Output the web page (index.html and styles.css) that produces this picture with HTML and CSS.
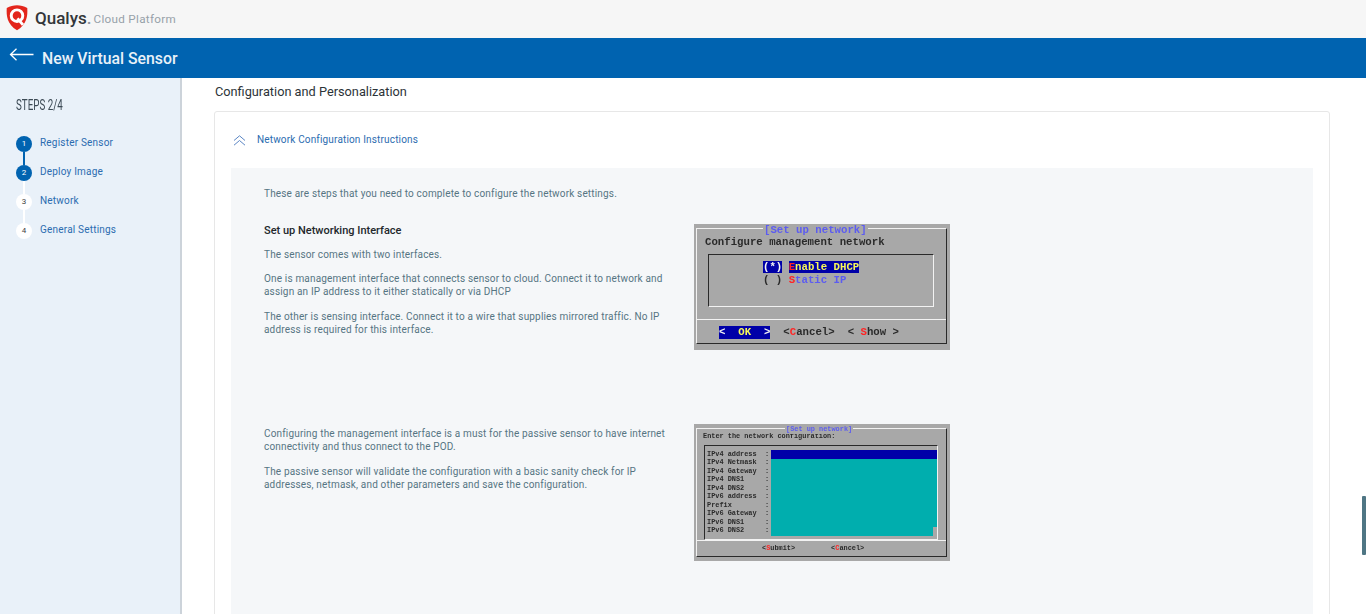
FILE: index.html
```html
<!DOCTYPE html>
<html lang="en">
<head>
    <meta charset="UTF-8">
    <title>New Virtual Sensor</title>
    <link rel="stylesheet" href="styles.css">
</head>
<body>
    <header class="topbar">
        <svg class="logo" width="22" height="27" viewBox="0 0 24 28">
            <path d="M12 0.500 C8 0.500 4.500 1.500 0.800 3.500 C0.300 12 1 21 12 28 C23 21 23.700 12 23.200 3.500 C19.500 1.500 16 0.500 12 0.500 Z" fill="#e3261c"/>
            <circle cx="12" cy="12" r="6.300" fill="none" stroke="#fff" stroke-width="3.200"/>
            <path d="M12.500 15 L18.500 22" fill="none" stroke="#fff" stroke-width="3.200"/>
        </svg>
        <span class="brand">Qualys<span class="brand-dot">.</span></span>
        <span class="brand-sub">Cloud Platform</span>
    </header>

    <div class="titlebar">
        <svg class="back" width="25" height="14" viewBox="0 0 25 14">
            <path d="M24.500 6.500 H1.500 M7.500 0.700 L1.500 6.500 L7.500 12.300" fill="none" stroke="#fff" stroke-width="1.300"/>
        </svg>
        <h1>New Virtual Sensor</h1>
    </div>

    <div class="layout">
        <aside class="sidebar">
            <div class="steps-title">STEPS 2/4</div>
            <ul class="steps">
                <li class="step done"><span class="dot">1</span>Register Sensor</li>
                <li class="step active"><span class="dot">2</span>Deploy Image</li>
                <li class="step"><span class="dot">3</span>Network</li>
                <li class="step last"><span class="dot">4</span>General Settings</li>
            </ul>
        </aside>

        <main class="content">
            <h2>Configuration and Personalization</h2>
            <section class="card">
                <div class="card-head">
                    <svg width="13" height="11" viewBox="0 0 13 11">
                        <path d="M1 5.500 L6.500 0.800 L12 5.500 M1 10.200 L6.500 5.500 L12 10.200" fill="none" stroke="#5b86c4" stroke-width="1"/>
                    </svg>
                    <span class="card-label">Network Configuration Instructions</span>
                </div>
                <div class="panel">
                    <p class="intro">These are steps that you need to complete to configure the network settings.</p>

                    <div class="row row-first">
                        <div class="row-text">
                            <h3>Set up Networking Interface</h3>
                            <p>The sensor comes with two interfaces.</p>
                            <p>One is management interface that connects sensor to cloud. Connect it to network and assign an IP address to it either statically or via DHCP</p>
                            <p>The other is sensing interface. Connect it to a wire that supplies mirrored traffic. No IP address is required for this interface.</p>
                        </div>
                        <div class="term term-dhcp">
                            <div class="term-frame">
                                <span class="term-title">[Set up network]</span>
                                <div class="term-heading">Configure management network</div>
                                <div class="term-box">
                                    <div class="opt"><span class="sel">(*)</span> <span class="sel"><b>E</b><i>nable DHCP</i></span></div>
                                    <div class="opt"><span>( )</span> <span><b>S</b><em>tatic IP</em></span></div>
                                </div>
                                <div class="term-buttons">
                                    <span class="btn-ok">&lt;  <i>OK</i>  &gt;</span>
                                    <span>&lt;<b>C</b>ancel&gt;</span>
                                    <span>&lt; <b>S</b>how &gt;</span>
                                </div>
                            </div>
                        </div>
                    </div>

                    <div class="row">
                        <div class="row-text row-text-second">
                            <p>Configuring the management interface is a must for the passive sensor to have internet connectivity and thus connect to the POD.</p>
                            <p>The passive sensor will validate the configuration with a basic sanity check for IP addresses, netmask, and other parameters and save the configuration.</p>
                        </div>
                        <div class="term term-config">
                            <div class="term-frame">
                                <span class="term-title">[Set up network]</span>
                                <div class="term-heading">Enter the network configuration:</div>
                                <div class="term-box">
                                    <div class="labels">
                                        <div>IPv4 address  :</div>
                                        <div>IPv4 Netmask  :</div>
                                        <div>IPv4 Gateway  :</div>
                                        <div>IPv4 DNS1     :</div>
                                        <div>IPv4 DNS2     :</div>
                                        <div>IPv6 address  :</div>
                                        <div>Prefix        :</div>
                                        <div>IPv6 Gateway  :</div>
                                        <div>IPv6 DNS1     :</div>
                                        <div>IPv6 DNS2     :</div>
                                    </div>
                                    <div class="fields">
                                        <div class="field-on"></div>
                                        <div class="field-notch"></div>
                                    </div>
                                </div>
                                <div class="term-buttons">
                                    <span>&lt;<b>S</b>ubmit&gt;</span>
                                    <span>&lt;<b>C</b>ancel&gt;</span>
                                </div>
                            </div>
                        </div>
                    </div>
                </div>
            </section>
        </main>
    </div>

    <div class="scroll-thumb"></div>
</body>
</html>
```

FILE: styles.css
```css
* {
    box-sizing: border-box;
}

html, body {
    height: 614px;
    overflow: hidden;
}

body {
    margin: 0;
    font-family: Roboto, "Liberation Sans", sans-serif;
    background: #fff;
    color: #567583;
}

.topbar {
    height: 38px;
    background: #f6f6f6;
    display: flex;
    align-items: center;
    padding-left: 6px;
}

.logo {
    margin-top: -3px;
}

.brand {
    margin-left: 7px;
    margin-top: -2px;
    font-size: 17px;
    font-weight: 500;
    color: #33363a;
}

.brand-dot {
    color: #8a939b;
}

.brand-sub {
    margin-left: 2px;
    font-size: 11.700px;
    letter-spacing: 0.300px;
    color: #97a1a9;
}

.titlebar {
    height: 40px;
    background: #0063b0;
    display: flex;
    align-items: center;
    padding-left: 9px;
}

.back {
    margin-top: -6px;
}

.titlebar h1 {
    margin: 0 0 0 8px;
    font-size: 15.800px;
    font-weight: 500;
    color: #e8f1f8;
}

.layout {
    display: flex;
    height: 536px;
}

.sidebar {
    width: 182px;
    flex-shrink: 0;
    background: #e9f1f9;
    border-right: 2px solid #ccd3da;
    padding: 19px 0 0 16px;
}

.steps-title {
    font-size: 14px;
    line-height: 16px;
    color: #3c4a55;
    transform: scaleX(0.700);
    transform-origin: left center;
}

.steps {
    list-style: none;
    margin: 23px 0 0;
    padding: 0;
}

.step {
    position: relative;
    height: 29px;
    display: flex;
    align-items: flex-start;
    font-size: 10px;
    line-height: 13px;
    letter-spacing: 0.200px;
    color: #2b6cb0;
}

.dot {
    width: 16px;
    height: 16px;
    margin-right: 8px;
    border-radius: 50%;
    background: #fff;
    color: #444;
    font-size: 8px;
    line-height: 16px;
    letter-spacing: 0;
    text-align: center;
    flex-shrink: 0;
}

.step::after {
    content: "";
    position: absolute;
    left: 7px;
    top: 16px;
    width: 2px;
    height: 13px;
    background: #fff;
}

.step.last::after {
    display: none;
}

.done::after {
    background: #0063b0;
}

.done .dot,
.active .dot {
    background: #0063b0;
    color: #fff;
}

.content {
    flex: 1;
    min-width: 0;
    padding: 5px 36px 0 32px;
}

.content h2 {
    margin: 1px 0 0 1px;
    font-size: 12.750px;
    font-weight: 400;
    line-height: 16px;
    color: #2c3338;
}

.card {
    margin-top: 11px;
    height: 600px;
    padding: 0 16px;
    background: #fff;
    border: 1px solid #e7e7e7;
    border-radius: 3px;
}

.card-head {
    height: 56px;
    display: flex;
    align-items: center;
    gap: 11px;
    padding: 0 0 0 2px;
    font-size: 10px;
    letter-spacing: 0.160px;
    color: #2b6cb0;
}

.card-label {
    margin-top: -2px;
}

.panel {
    height: 540px;
    background: #f5f7f9;
    padding: 19px 0 0 33px;
    font-size: 10px;
    line-height: 13px;
    letter-spacing: 0.165px;
}

.panel p {
    margin: 0;
}

.intro {
    height: 37px;
}

.row {
    display: flex;
}

.row-first {
    height: 200px;
}

.row-text {
    width: 430px;
    padding-right: 25px;
}

.row-text p {
    margin-bottom: 12px;
}

.row-text h3 + p {
    margin-bottom: 11px;
}

.row-text h3 {
    margin: 0 0 11px;
    font-size: 11px;
    font-weight: 500;
    line-height: 13px;
    letter-spacing: 0;
    color: #23282c;
}

.row-text-second {
    padding-top: 3px;
}

.term {
    width: 256px;
    background: #a8a8a8;
    font-family: "Liberation Mono", monospace;
    font-weight: 700;
    color: #2a2a2a;
    letter-spacing: 0;
}

.term-title,
.term-heading,
.opt,
.labels div,
.term-buttons span {
    white-space: pre;
}

.term-dhcp {
    height: 126px;
    padding: 4px 3px 6px 2px;
    font-size: 10.700px;
    line-height: 13px;
}

.term-config {
    height: 137px;
    padding: 4px 3px 4px 2px;
    font-size: 6.900px;
    line-height: 8.550px;
}

.term-frame {
    position: relative;
    height: 100%;
    padding: 7px 0 0 8px;
    border: 1px solid;
    border-color: #f2f2f2 #2a2a2a #2a2a2a #f2f2f2;
    filter: blur(0.350px);
}

.term-title {
    position: absolute;
    top: -5px;
    left: 66px;
    padding: 0 1px;
    background: #a8a8a8;
    color: #5c5cf0;
}

.term-box {
    margin: 5px 12px 0 3px;
    height: 53px;
    padding-top: 6px;
    border: 1px solid;
    border-color: #2a2a2a #f2f2f2 #f2f2f2 #2a2a2a;
}

.opt {
    padding-left: 54px;
}

.opt b,
.term-buttons b {
    color: #ff2424;
}

.opt em {
    font-style: normal;
    color: #5c5cf0;
}

.sel {
    background: #0000a8;
    color: #f4f4f4;
}

.sel i {
    font-style: normal;
    color: #f8f858;
}

.term-buttons {
    display: flex;
    margin: 12px 0 0 -8px;
    padding: 6px 0 0 22px;
    gap: 13px;
    border-top: 1px solid #f2f2f2;
}

.btn-ok {
    background: #0000a8;
    color: #f4f4f4;
}

.btn-ok i {
    font-style: normal;
    color: #f8f858;
}

.term-config .term-frame {
    padding: 3px 0 0 6px;
}

.term-config .term-title {
    left: 88px;
    top: -4px;
}

.term-config .term-box {
    display: flex;
    margin: 4px 8px 0 1px;
    height: 95px;
    padding: 4px 0 0 2px;
}

.labels {
    width: 64px;
    flex-shrink: 0;
}

.fields {
    flex: 1;
    position: relative;
    height: 86px;
    margin-right: 0;
    background: #00aeae;
}

.field-on {
    height: 9px;
    background: #0000a8;
}

.field-notch {
    position: absolute;
    right: 0;
    bottom: 0;
    width: 4px;
    height: 9px;
    background: #a8a8a8;
}

.term-config .term-buttons {
    margin: 0 0 0 -6px;
    padding: 3px 0 0 65px;
    gap: 36px;
}

.scroll-thumb {
    position: absolute;
    top: 496px;
    right: 0;
    width: 4px;
    height: 59px;
    border-radius: 1px;
    background: #4f7684;
}
```
